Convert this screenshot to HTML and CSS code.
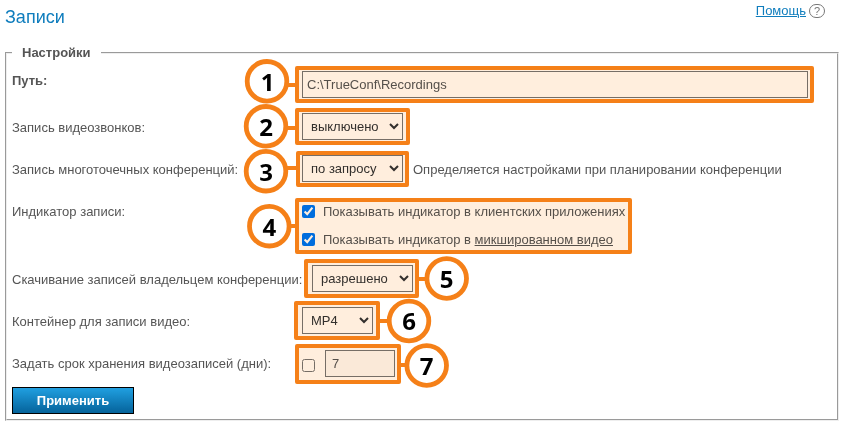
FILE: index.html
```html
<!DOCTYPE html>
<html lang="ru">
<head>
<meta charset="utf-8">
<title>Записи</title>
<link rel="stylesheet" href="styles.css">
</head>
<body>
<header class="top">
  <h1 class="title">Записи</h1>
  <div class="help"><a href="#" class="help-link">Помощь</a><span class="help-icon">?</span></div>
</header>
<fieldset class="settings">
  <legend class="legend">Настройки</legend>
  <div class="row">
    <label class="label strong">Путь:</label>
    <input class="field path" type="text" value="C:\TrueConf\Recordings">
  </div>
  <div class="row">
    <label class="label">Запись видеозвонков:</label>
    <select class="field select"><option>выключено</option></select>
  </div>
  <div class="row">
    <label class="label">Запись многоточечных конференций:</label>
    <select class="field select"><option>по запросу</option></select>
    <span class="note">Определяется настройками при планировании конференции</span>
  </div>
  <div class="row tall">
    <span class="label">Индикатор записи:</span>
    <div class="checks">
      <label class="check"><input class="box" type="checkbox" checked><span class="check-text">Показывать индикатор в клиентских приложениях</span></label>
      <label class="check"><input class="box" type="checkbox" checked><span class="check-text">Показывать индикатор в <u>микшированном видео</u></span></label>
    </div>
  </div>
  <div class="row">
    <label class="label wide">Скачивание записей владельцем конференции:</label>
    <select class="field select"><option>разрешено</option></select>
  </div>
  <div class="row">
    <label class="label">Контейнер для записи видео:</label>
    <select class="field select small"><option>MP4</option></select>
  </div>
  <div class="row last">
    <label class="label">Задать срок хранения видеозаписей (дни):</label>
    <input class="box" type="checkbox">
    <input class="field days" type="text" value="7" disabled>
  </div>
  <button class="apply" type="button">Применить</button>
</fieldset>
<svg class="tint" width="842" height="424">
  <rect x="297" y="68" width="515" height="33"/>
  <rect x="297" y="110" width="111" height="33"/>
  <rect x="298" y="153" width="109" height="32"/>
  <rect x="297" y="200" width="333" height="52"/>
  <rect x="306" y="261" width="111" height="35"/>
  <rect x="296" y="303" width="82" height="35"/>
  <rect x="297" y="346" width="102" height="36"/>
</svg>
<svg class="marks" width="842" height="424">
  <g class="frames">
    <rect x="297" y="68" width="515" height="33"/>
    <rect x="297" y="110" width="111" height="33"/>
    <rect x="298" y="153" width="109" height="32"/>
    <rect x="297" y="200" width="333" height="52"/>
    <rect x="306" y="261" width="111" height="35"/>
    <rect x="296" y="303" width="82" height="35"/>
    <rect x="297" y="346" width="102" height="36"/>
    <path d="M287 85H297M286 128H297M286 168H298M289 226H297M417 279H427M378 321H389M399 365H407"/>
  </g>
  <g class="rings">
    <circle cx="267" cy="81.3" r="19.8"/>
    <circle cx="266" cy="126.3" r="19.8"/>
    <circle cx="266" cy="171.2" r="19.8"/>
    <circle cx="269.3" cy="226.2" r="19.8"/>
    <circle cx="446.7" cy="278.5" r="19.8"/>
    <circle cx="409" cy="321" r="19.8"/>
    <circle cx="426.7" cy="365.5" r="19.8"/>
  </g>
  <g class="digits">
    <text x="267.5" y="91">1</text>
    <text x="266" y="136">2</text>
    <text x="266" y="181">3</text>
    <text x="269.3" y="236">4</text>
    <text x="446.5" y="288">5</text>
    <text x="409" y="330">6</text>
    <text x="426.7" y="375">7</text>
  </g>
</svg>
</body>
</html>
```
FILE: styles.css
```css
* { box-sizing: border-box; }

body {
  position: relative;
  margin: 0;
  width: 842px;
  height: 424px;
  overflow: hidden;
  background: #fff;
  color: #555;
  font: 13px/16px "Liberation Sans", Arial, sans-serif;
}

.top {
  display: flex;
  justify-content: space-between;
  height: 45px;
  padding: 3px 17px 0 5px;
}

.title {
  margin: 3px 0 0;
  font-size: 18px;
  line-height: 22px;
  font-weight: 400;
  color: #0f7dbd;
}

.help { display: flex; gap: 3px; }
.help-link { color: #0f7dbd; }

.help-icon {
  width: 16px;
  height: 14px;
  margin-top: 1px;
  border: 1px solid #777;
  border-radius: 7px;
  font-size: 11px;
  line-height: 13px;
  text-align: center;
  color: #777;
}

.settings {
  width: 834px;
  height: 376px;
  margin: 0 0 0 5px;
  padding: 10px 5px 0;
  border: 2px groove #eee;
}

.legend {
  padding: 0 10px;
  font-weight: 700;
  line-height: 16px;
}

.row { display: flex; height: 42px; }
.row.tall { height: 68px; }
.row.last { height: 38px; padding-top: 1px; }

.label {
  width: 290px;
  flex: none;
  padding-top: 7px;
  white-space: nowrap;
}

.label.wide { width: 300px; }
.label.strong { padding-top: 2px; font-weight: 700; }

.field {
  height: 27px;
  margin: 0;
  border: 1px solid #767676;
  border-radius: 0;
  background: #fff;
  color: #555;
  font: inherit;
}

.path { width: 506px; padding: 0 4px; }
.select { width: 101px; padding: 0 4px; color: #333; }
.small { width: 71px; }
.note { padding: 7px 0 0 10px; }

.check {
  display: flex;
  align-items: center;
  height: 28px;
}

.check-text { padding-top: 2px; }

.box { width: 13px; height: 13px; margin: 0 8px 0 0; }
.last .box { margin: 9px 10px 0 0; }
.last .label { padding-top: 6px; }

.days {
  width: 70px;
  padding: 0 6px;
  background: #fafafa;
}

.apply {
  display: block;
  width: 122px;
  height: 27px;
  padding: 0;
  border: 1px solid #000;
  background: linear-gradient(#209fe0, #05639b);
  color: #fff;
  font: bold 13px/16px "Liberation Sans", Arial, sans-serif;
}

.tint, .marks {
  position: absolute;
  top: 0;
  left: 0;
  pointer-events: none;
}

.tint { fill: #ffeedd; mix-blend-mode: multiply; }
.frames { fill: none; stroke: #f58018; stroke-width: 4; stroke-linejoin: round; }
.rings { fill: #fff; stroke: #f58018; stroke-width: 4.8; }
.digits { font: 700 24px "Open Sans", sans-serif; fill: #000; text-anchor: middle; }
```
